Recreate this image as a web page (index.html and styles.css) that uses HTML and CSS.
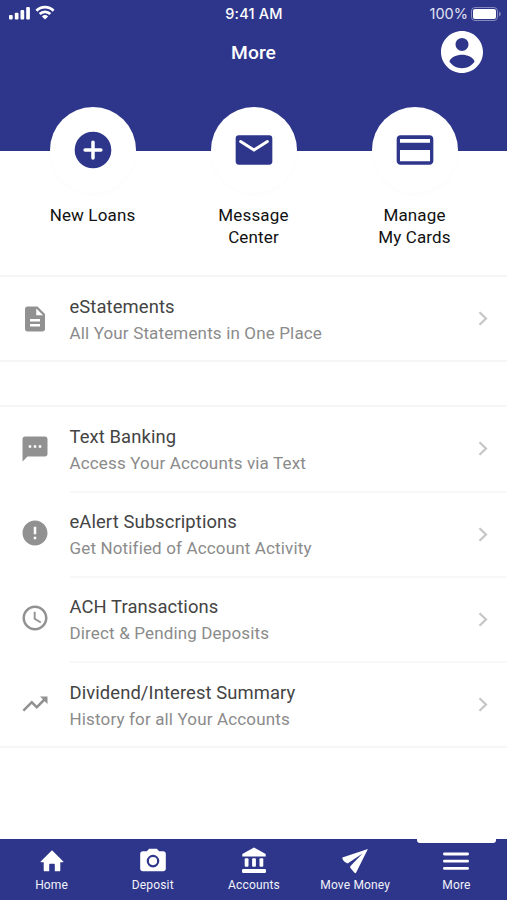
FILE: index.html
```html
<!DOCTYPE html>
<html lang="en">
<head>
<meta charset="utf-8">
<title>More</title>
<link rel="stylesheet" href="styles.css">
</head>
<body>
<div class="screen">
  <header class="header">
    <div class="status">
      <div class="signals">
        <svg width="22" height="15" viewBox="0 0 22 15" fill="#fff"><rect x="0" y="10" width="3.7" height="4.5" rx="1"/><rect x="5.8" y="7.7" width="3.7" height="6.8" rx="1"/><rect x="11.5" y="5" width="3.7" height="9.5" rx="1"/><rect x="17.2" y="2" width="3.7" height="12.5" rx="1"/></svg>
        <svg class="wifi" width="20" height="15" viewBox="0 0 20 15" fill="none" stroke="#fff" stroke-width="2.7"><path d="M1.4 5.7a12.2 12.2 0 0 1 17.2 0M4.7 9a7.5 7.5 0 0 1 10.6 0"/><path d="M10 14.5l-3.1-3.1a4.4 4.4 0 0 1 6.2 0z" fill="#fff" stroke="none"/></svg>
      </div>
      <span class="time">9:41 AM</span>
      <div class="power"><span class="percent">100%</span>
        <svg width="30" height="14" viewBox="0 0 30 14"><rect x=".5" y=".5" width="26" height="13" rx="3.5" fill="none" stroke="#8589bd"/><rect x="2" y="2" width="23" height="10" rx="2" fill="#fff"/><path d="M28 4.5c2.3 1 2.3 4 0 5z" fill="#8589bd"/></svg>
      </div>
    </div>
    <div class="titlebar">
      <h1>More</h1>
      <svg class="avatar" viewBox="2 2 20 20" fill="#fff"><path d="M12 2C6.48 2 2 6.48 2 12s4.48 10 10 10 10-4.48 10-10S17.52 2 12 2zm0 3.3a3.1 3.1 0 1 1 0 6.2 3.1 3.1 0 0 1 0-6.2zM12 19.700c-2.500 0-4.700-1.200-6-3.200 .5-2 3.600-3.250 6-3.250s5.500 1.250 6 3.250C16.700 18.500 14.500 19.700 12 19.700z"/></svg>
    </div>
  </header>

  <section class="actions">
    <div class="action">
      <div class="disc"><svg width="44" height="44" viewBox="0 0 24 24"><circle cx="12" cy="12" r="10" fill="#2e368b"/><path d="M12 7.700v8.600M7.700 12h8.600" stroke="#fff" stroke-width="1.900" stroke-linecap="round"/></svg></div>
      <p>New Loans</p>
    </div>
    <div class="action">
      <div class="disc"><svg width="44" height="44" viewBox="0 0 24 24"><rect x="2" y="4" width="20" height="16" rx="1.700" fill="#2e368b"/><path d="M4.700 7.400L12 12l7.300-4.600" fill="none" stroke="#fff" stroke-width="1.600" stroke-linecap="round"/></svg></div>
      <p>Message<br>Center</p>
    </div>
    <div class="action">
      <div class="disc"><svg width="44" height="44" viewBox="0 0 24 24" fill="#2e368b"><path d="M20 4H4c-1.110 0-2 .89-2 2v12c0 1.110.89 2 2 2h16c1.110 0 2-.89 2-2V6c0-1.110-.89-2-2-2zm.2 14.200H3.800V12h16.400zm0-10.200H3.800V6h16.400z"/></svg></div>
      <p>Manage<br>My Cards</p>
    </div>
  </section>

  <main class="list">
    <div class="group">
      <div class="row">
        <svg class="icon" viewBox="0 0 24 24"><path d="M14 2H6c-1.100 0-1.990.9-1.990 2L4 20c0 1.100.89 2 1.990 2H18c1.100 0 2-.9 2-2V8l-6-6zm2 16H8v-2h8v2zm0-4H8v-2h8v2zm-3-5V3.500L18.500 9H13z"/></svg>
        <div class="body"><div class="text"><b>eStatements</b><span>All Your Statements in One Place</span></div><svg class="chevron" viewBox="0 0 10 15"><path d="M1.500 1.200l6.500 6.300-6.500 6.300"/></svg></div>
      </div>
    </div>
    <div class="group">
      <div class="row">
        <svg class="icon" viewBox="0 0 24 24"><path d="M20 2H4c-1.100 0-1.990.9-1.990 2L2 22l4-4h14c1.100 0 2-.9 2-2V4c0-1.100-.9-2-2-2zM9 11H7V9h2v2zm4 0h-2V9h2v2zm4 0h-2V9h2v2z"/></svg>
        <div class="body"><div class="text"><b>Text Banking</b><span>Access Your Accounts via Text</span></div><svg class="chevron" viewBox="0 0 10 15"><path d="M1.500 1.200l6.500 6.300-6.500 6.300"/></svg></div>
      </div>
      <div class="row">
        <svg class="icon" viewBox="0 0 24 24"><path d="M12 2C6.480 2 2 6.480 2 12s4.480 10 10 10 10-4.480 10-10S17.520 2 12 2zm1 15h-2v-2h2v2zm0-4h-2V7h2v6z"/></svg>
        <div class="body"><div class="text"><b>eAlert Subscriptions</b><span>Get Notified of Account Activity</span></div><svg class="chevron" viewBox="0 0 10 15"><path d="M1.500 1.200l6.500 6.300-6.500 6.300"/></svg></div>
      </div>
      <div class="row">
        <svg class="icon" viewBox="0 0 24 24"><path d="M11.990 2C6.470 2 2 6.480 2 12s4.470 10 9.990 10C17.520 22 22 17.520 22 12S17.520 2 11.990 2zM12 20c-4.420 0-8-3.580-8-8s3.580-8 8-8 8 3.580 8 8-3.580 8-8 8z"/><path d="M12.500 7H11v6l5.250 3.150.75-1.230-4.500-2.670z"/></svg>
        <div class="body"><div class="text"><b>ACH Transactions</b><span>Direct &amp; Pending Deposits</span></div><svg class="chevron" viewBox="0 0 10 15"><path d="M1.500 1.200l6.500 6.300-6.500 6.300"/></svg></div>
      </div>
      <div class="row">
        <svg class="icon" viewBox="0 0 24 24"><path d="M16 6l2.290 2.290-4.880 4.880-4-4L2 16.590 3.410 18l6-6 4 4 6.300-6.290L22 12V6z"/></svg>
        <div class="body"><div class="text"><b>Dividend/Interest Summary</b><span>History for all Your Accounts</span></div><svg class="chevron" viewBox="0 0 10 15"><path d="M1.500 1.200l6.500 6.300-6.500 6.300"/></svg></div>
      </div>
    </div>
  </main>

  <nav class="tabs">
    <a class="tab"><svg viewBox="0 0 30 28"><path d="M15 3.200L3.700 14.400c-.3.400 0 .8.500.8h2.500v8c0 .7.400 1 1 1h4.500v-6.500c0-.7.400-1 1-1h3.600c.6 0 1 .3 1 1v6.500h4.500c.6 0 1-.3 1-1v-8h2.500c.5 0 .8-.4.500-.8z"/></svg>Home</a>
    <a class="tab"><svg viewBox="0 0 30 28"><path fill-rule="evenodd" d="M11.200 1.700h7.600l2.400 2.600h4c1.500 0 2.600 1 2.600 2.500v15c0 1.500-1.100 2.500-2.600 2.500H4.800c-1.500 0-2.600-1-2.600-2.500v-15c0-1.500 1.100-2.500 2.600-2.500h4zM15 7.800a6.300 6.300 0 1 0 0 12.600 6.300 6.300 0 0 0 0-12.600zm0 2.200a4.100 4.100 0 1 1 0 8.200 4.100 4.100 0 0 1 0-8.200z"/></svg>Deposit</a>
    <a class="tab"><svg viewBox="0 0 30 28"><path d="M15 .5L3.300 7v2.500h23.400V7z"/><rect x="5.700" y="11.300" width="3.800" height="8.500" rx="1"/><rect x="13.100" y="11.300" width="3.800" height="8.500" rx="1"/><rect x="20.500" y="11.300" width="3.800" height="8.500" rx="1"/><rect x="3" y="22" width="24" height="4" rx="1.300"/></svg>Accounts</a>
    <a class="tab"><svg viewBox="0 0 30 28"><path d="M27.900 2L2.400 10.500c-.3 1.500.9 3.200 2.500 4.500l2.700 1.500L22.500 6.500 10.300 19.200l-.1 1.600 4.300 5c.5.600 1.300.5 1.700-.2z"/></svg>Move Money</a>
    <a class="tab active"><svg viewBox="0 0 30 28" fill="none" stroke="#fff" stroke-width="2.800" stroke-linecap="round"><path d="M3.400 7h23.200M3.400 14.200h23.200M3.400 21.400h23.200"/></svg>More</a>
  </nav>
</div>
</body>
</html>
```
FILE: styles.css
```css
* { box-sizing: border-box; }
body { margin: 0; font-family: Roboto, sans-serif; background: #fff; }
.screen { width: 507px; height: 900px; display: flex; flex-direction: column; overflow: hidden; }
.header { height: 151px; flex: none; background: #2e368b; color: #fff; }
.status { height: 28px; padding: 0 6px 0 9px; display: grid; grid-template-columns: 1fr auto 1fr; align-items: center; }
.signals { display: flex; gap: 4px; align-items: center; margin-top: -3px; }
.time { font: 500 14.5px/28px Inter, sans-serif; letter-spacing: .2px; margin-right: 2px; }
.power { display: flex; justify-content: flex-end; align-items: center; gap: 3px; margin-top: -1px; }
.percent { font: 400 14.5px/28px Inter, sans-serif; color: #e2e3f2; }
.titlebar { display: grid; grid-template-columns: 1fr auto 1fr; align-items: center; height: 48px; padding-right: 24px; }
h1 { grid-column: 2; margin: 2px -24px 0 0; font: 500 19.2px/24px Roboto, sans-serif; letter-spacing: .1px; }
.avatar { width: 42px; height: 42px; justify-self: end; }
.actions { height: 168px; flex: none; margin-top: -44px; padding: 0 12px; display: grid; grid-template-columns: repeat(3, 1fr); }
.action { display: flex; flex-direction: column; align-items: center; }
.disc { width: 86px; height: 86px; border-radius: 50%; background: #fff; box-shadow: 0 2px 5px rgba(0,0,0,.015); display: flex; align-items: center; justify-content: center; }
.action p { margin: 11px 0 0; font-size: 17px; line-height: 22.300px; letter-spacing: .15px; color: #111; text-align: center; }
.group { border: solid #f6f6f6; border-width: 2px 0; }
.group + .group { margin-top: 43px; }
.row { display: flex; height: 83.300px; align-items: center; padding-left: 20px; }
.row + .row { height: 85.250px; }
.icon { width: 30px; height: 30px; margin-right: 19.500px; fill: #919191; flex: none; }
.body { flex: 1; height: 100%; display: flex; align-items: center; justify-content: space-between; padding-right: 19px; }
.row + .row .body { border-top: 2px solid #f8f8f8; }
.text { display: flex; flex-direction: column; padding-top: 2px; line-height: 26px; letter-spacing: .15px; }
.text b { font-weight: 400; font-size: 18.400px; letter-spacing: .1px; color: #444; }
.text span { font-size: 17px; color: #8b8b8b; }
.chevron { width: 10px; height: 15px; fill: none; stroke: #c5c5c5; stroke-width: 2.200; }
.tabs { height: 61px; flex: none; margin-top: auto; background: #2e368b; padding-left: 1px; display: grid; grid-template-columns: repeat(5, 1fr); }
.tab { position: relative; display: flex; flex-direction: column; align-items: center; padding-top: 8px; color: #f2f2fa; font-size: 12px; line-height: 20px; letter-spacing: .15px; }
.tab svg { width: 30px; height: 28px; }
.tab svg:not([fill]) { fill: #fff; }
.active::before { content: ""; position: absolute; top: -1px; left: 11px; width: 79px; height: 5px; background: #fff; border-radius: 0 0 3px 3px; }
```
